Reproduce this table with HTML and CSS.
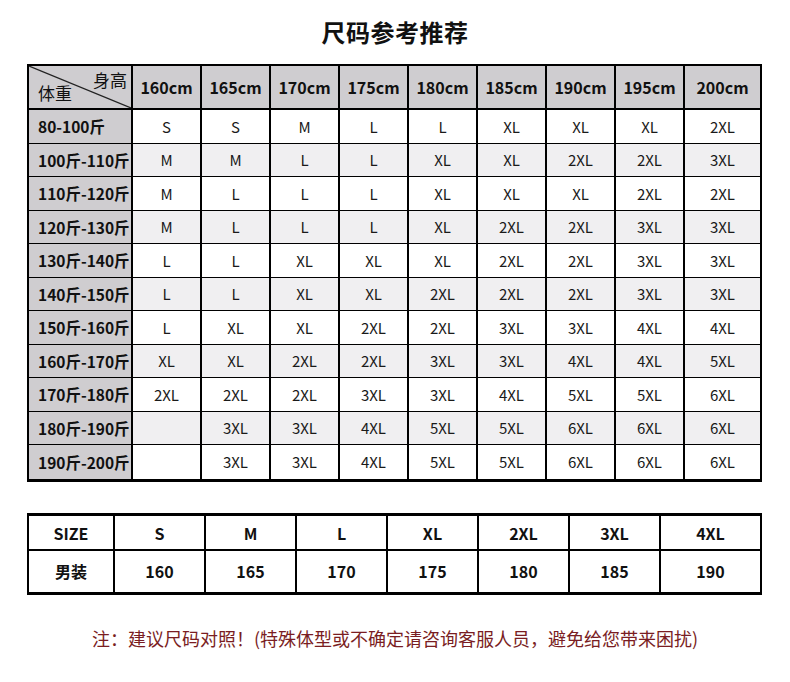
FILE: index.html
```html
<!DOCTYPE html>
<html lang="zh">
<head>
<meta charset="utf-8">
<title>尺码参考推荐</title>
<link rel="stylesheet" href="styles.css">
</head>
<body>
<div class="page">
  <h1 class="title">尺码参考推荐</h1>
  <table class="chart">
    <colgroup>
      <col class="col-first">
      <col class="col-h"><col class="col-h"><col class="col-h"><col class="col-h"><col class="col-h"><col class="col-h"><col class="col-h"><col class="col-h"><col>
    </colgroup>
    <thead>
      <tr>
        <th class="corner">
          <svg class="diag" viewBox="0 0 100 100" preserveAspectRatio="none"><line x1="0" y1="0" x2="100" y2="100" stroke="#222" stroke-width="1.2" vector-effect="non-scaling-stroke"/></svg>
          <span class="corner-h">身高</span>
          <span class="corner-w">体重</span>
        </th>
        <th>160cm</th><th>165cm</th><th>170cm</th><th>175cm</th><th>180cm</th><th>185cm</th><th>190cm</th><th>195cm</th><th>200cm</th>
      </tr>
    </thead>
    <tbody>
      <tr><th>80-100斤</th><td>S</td><td>S</td><td>M</td><td>L</td><td>L</td><td>XL</td><td>XL</td><td>XL</td><td>2XL</td></tr>
      <tr class="alt"><th>100斤-110斤</th><td>M</td><td>M</td><td>L</td><td>L</td><td>XL</td><td>XL</td><td>2XL</td><td>2XL</td><td>3XL</td></tr>
      <tr><th>110斤-120斤</th><td>M</td><td>L</td><td>L</td><td>L</td><td>XL</td><td>XL</td><td>XL</td><td>2XL</td><td>2XL</td></tr>
      <tr class="alt"><th>120斤-130斤</th><td>M</td><td>L</td><td>L</td><td>L</td><td>XL</td><td>2XL</td><td>2XL</td><td>3XL</td><td>3XL</td></tr>
      <tr><th>130斤-140斤</th><td>L</td><td>L</td><td>XL</td><td>XL</td><td>XL</td><td>2XL</td><td>2XL</td><td>3XL</td><td>3XL</td></tr>
      <tr class="alt"><th>140斤-150斤</th><td>L</td><td>L</td><td>XL</td><td>XL</td><td>2XL</td><td>2XL</td><td>2XL</td><td>3XL</td><td>3XL</td></tr>
      <tr><th>150斤-160斤</th><td>L</td><td>XL</td><td>XL</td><td>2XL</td><td>2XL</td><td>3XL</td><td>3XL</td><td>4XL</td><td>4XL</td></tr>
      <tr class="alt"><th>160斤-170斤</th><td>XL</td><td>XL</td><td>2XL</td><td>2XL</td><td>3XL</td><td>3XL</td><td>4XL</td><td>4XL</td><td>5XL</td></tr>
      <tr><th>170斤-180斤</th><td>2XL</td><td>2XL</td><td>2XL</td><td>3XL</td><td>3XL</td><td>4XL</td><td>5XL</td><td>5XL</td><td>6XL</td></tr>
      <tr class="alt"><th>180斤-190斤</th><td></td><td>3XL</td><td>3XL</td><td>4XL</td><td>5XL</td><td>5XL</td><td>6XL</td><td>6XL</td><td>6XL</td></tr>
      <tr><th>190斤-200斤</th><td></td><td>3XL</td><td>3XL</td><td>4XL</td><td>5XL</td><td>5XL</td><td>6XL</td><td>6XL</td><td>6XL</td></tr>
    </tbody>
  </table>

  <table class="sizes">
    <colgroup>
      <col class="s-first"><col class="s-col"><col class="s-col"><col class="s-col"><col class="s-col"><col class="s-col"><col class="s-col"><col>
    </colgroup>
    <tbody>
      <tr class="s-head"><th>SIZE</th><td>S</td><td>M</td><td>L</td><td>XL</td><td>2XL</td><td>3XL</td><td>4XL</td></tr>
      <tr class="s-body"><th>男装</th><td>160</td><td>165</td><td>170</td><td>175</td><td>180</td><td>185</td><td>190</td></tr>
    </tbody>
  </table>

  <p class="note">注：建议尺码对照！(特殊体型或不确定请咨询客服人员，避免给您带来困扰)</p>
</div>
</body>
</html>
```

FILE: styles.css
```css
* { box-sizing: border-box; }

body {
  margin: 0;
  background: #ffffff;
  color: #111111;
  font-family: "Noto Sans CJK SC", "Noto Sans", sans-serif;
}

.page {
  width: 790px;
}

.title {
  margin: 0;
  padding-top: 16px;
  font-size: 24px;
  line-height: 32px;
  font-weight: 700;
  text-align: center;
  letter-spacing: 0.5px;
}

/* main chart */
.chart {
  margin: 16px 0 0 27px;
  width: 735px;
  table-layout: fixed;
  border-collapse: separate;
  border-spacing: 0;
  border: 2px solid #000;
  border-bottom-width: 3px;
}

.chart .col-first { width: 104px; }
.chart .col-h { width: 69px; }

.chart th,
.chart td {
  padding: 0;
  text-align: center;
  vertical-align: middle;
  border-right: 2px solid #000;
  border-bottom: 1px solid #000;
}

.chart tr > :last-child { border-right: 0; }
.chart tbody tr:last-child > * { border-bottom: 0; }

.chart thead th {
  height: 44px;
  background: #cfcdd0;
  font-size: 16px;
  font-weight: 700;
  border-bottom: 2px solid #000;
}

.chart tbody tr { height: 33.5px; }

.chart tbody th {
  background: #cfcdd0;
  font-size: 15.5px;
  font-weight: 700;
  text-align: left;
  padding-left: 9px;
  white-space: nowrap;
}

.chart td {
  font-size: 15px;
  font-weight: 400;
  color: #1a1a1a;
}

.chart tr.alt td { background: #f0eff1; }

.corner {
  position: relative;
  overflow: hidden;
}

.diag {
  position: absolute;
  left: 0;
  top: 0;
  width: 100%;
  height: 100%;
}

.corner-h,
.corner-w {
  position: absolute;
  font-size: 17px;
  font-weight: 400;
  line-height: 20px;
}

.corner-h { right: 4px; top: 4px; }
.corner-w { left: 9px; bottom: 5px; }

/* size table */
.sizes {
  margin: 31px 0 0 27px;
  width: 735px;
  table-layout: fixed;
  border-collapse: separate;
  border-spacing: 0;
  border: 2px solid #000;
  border-top-width: 3px;
  border-bottom-width: 3px;
}

.sizes .s-first { width: 86px; }
.sizes .s-col { width: 91px; }

.sizes th,
.sizes td {
  padding: 0;
  text-align: center;
  vertical-align: middle;
  font-size: 16px;
  font-weight: 700;
  border-right: 2px solid #000;
}

.sizes tr > :last-child { border-right: 0; }

.s-head > * {
  height: 35px;
  border-bottom: 2px solid #000;
  padding-top: 2px !important;
}

.s-body > * { height: 41px; }

.note {
  margin: 31px 0 0;
  text-align: center;
  font-size: 18px;
  line-height: 24px;
  color: #7a1d22;
}
```
